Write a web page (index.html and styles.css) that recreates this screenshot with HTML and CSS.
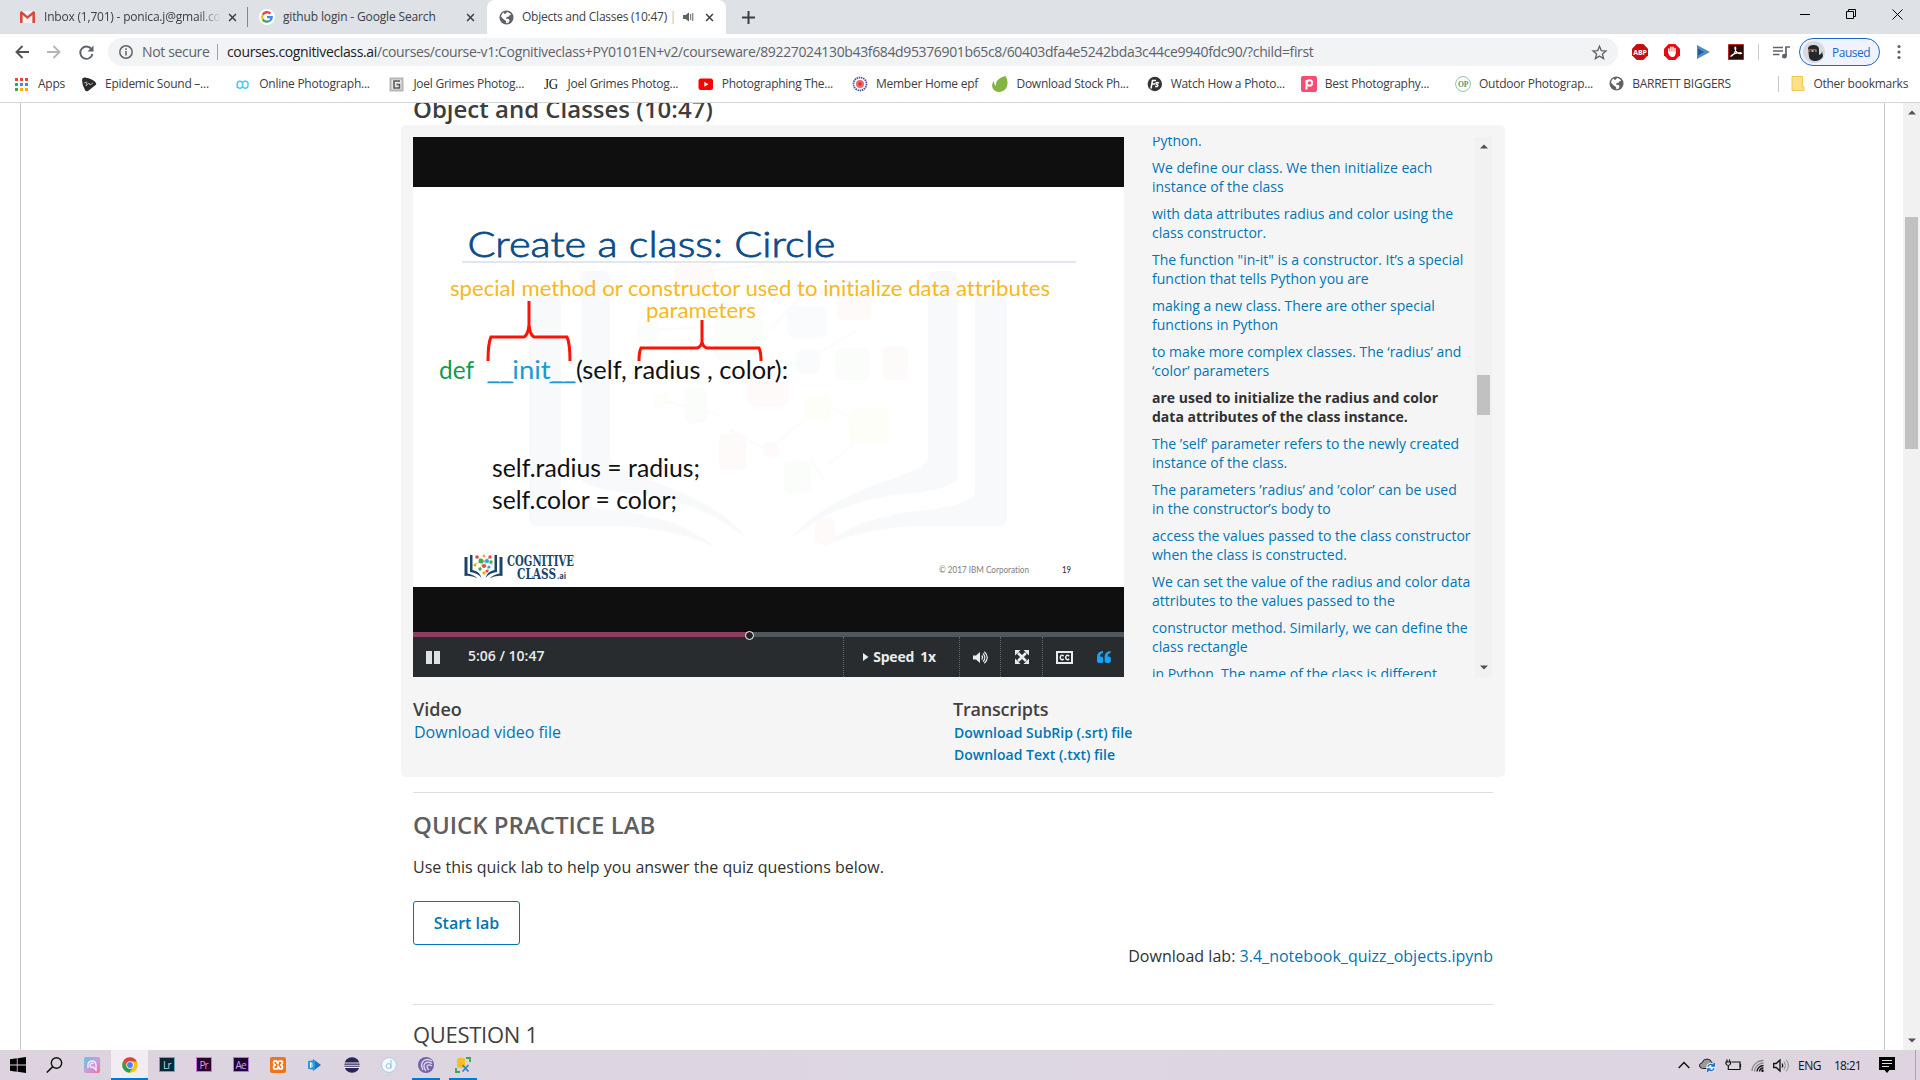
FILE: index.html
```html
<!DOCTYPE html>
<html lang="en">
<head>
<meta charset="utf-8">
<title>Objects and Classes (10:47)</title>
<link rel="stylesheet" href="styles.css">
</head>
<body>
<svg width="0" height="0" class="defs">
  <symbol id="close" viewBox="0 0 10 10"><path d="M1.2 1.2l7.6 7.6M8.8 1.2L1.2 8.8" stroke="#3c4043" stroke-width="1.7" fill="none"/></symbol>
  <symbol id="globe" viewBox="0 0 16 16"><circle cx="8" cy="8" r="7.5" fill="#5f6368"/><path d="M8.500 2.200c2 .3 3.500 1.300 4.600 2.800l-1.700.2-.8 1.700-2.400.6-.8 1.600 2.900.4 1 1.700-1.500 2.600-2 .3-.3-2.400-3-2.200-2.300-2.600c.2-2 1.400-3.700 3-4.300l.5 1.600 1.700-.4z" fill="#fff"/></symbol>
  <symbol id="tri-up" viewBox="0 0 8 5"><path d="M0 4.500L4 .5l4 4z" fill="#505050"/></symbol>
  <symbol id="tri-down" viewBox="0 0 8 5"><path d="M0 .5l4 4 4-4z" fill="#505050"/></symbol>
</svg>

<header class="browser">
  <div class="tabs">
    <div class="tab tab-mail">
      <svg width="15" height="12" viewBox="0 0 15 12"><path d="M1 0h13v12H1z" fill="#f2f2f2"/><path d="M0 1v11h2.600V4l4.900 4 4.900-4v8H15V1L13.500 0 7.500 5 1.500 0z" fill="#d54b3d"/></svg>
      <span class="tab-title">Inbox (1,701) - ponica.j@gmail.co</span>
      <svg class="x" width="9" height="9"><use href="#close"/></svg>
    </div>
    <div class="tab tab-search">
      <svg class="g" width="16" height="16" viewBox="0 0 16 16"><circle cx="8" cy="8" r="8" fill="#fff"/><g fill="none" stroke-width="2.300"><path d="M11.400 4.600A4.800 4.800 0 0 0 3.800 5.700" stroke="#ea4335"/><path d="M3.800 5.700a4.800 4.800 0 0 0 0 4.600" stroke="#fbbc05"/><path d="M3.800 10.300a4.800 4.800 0 0 0 7.300 1.200" stroke="#34a853"/><path d="M11.100 11.500A4.600 4.600 0 0 0 12.700 8.200H8" stroke="#4285f4"/></g></svg>
      <span class="tab-title">github login - Google Search</span>
      <svg class="x" width="9" height="9"><use href="#close"/></svg>
    </div>
    <div class="tab tab-active">
      <svg width="15" height="15"><use href="#globe"/></svg>
      <span class="tab-title">Objects and Classes (10:47) <i>|</i></span>
      <svg class="snd" width="11" height="10" viewBox="0 0 11 10"><path d="M0 3h2.500L6 .5v9L2.500 7H0z" fill="#5f6368"/><path d="M7.700 2v6M9.800 1v8" stroke="#5f6368"/></svg>
      <svg class="x" width="9" height="9"><use href="#close"/></svg>
    </div>
    <svg class="plus" width="13" height="13" viewBox="0 0 13 13"><path d="M6.500 0v13M0 6.500h13" stroke="#3c4043" stroke-width="2"/></svg>
    <div class="window-buttons">
      <svg width="10" height="11" viewBox="0 0 10 11"><path d="M0 5.500h10" stroke="#000"/></svg>
      <svg width="10" height="10" viewBox="0 0 10 10"><path d="M.5 2.500h7v7h-7zM2.500 2.500v-2h7v7h-2" fill="none" stroke="#000"/></svg>
      <svg width="11" height="11" viewBox="0 0 11 11"><path d="M.5.5l10 10M10.500.5l-10 10" stroke="#000"/></svg>
    </div>
  </div>

  <div class="toolbar">
    <svg width="14" height="14" viewBox="0 0 14 14"><path d="M14 7H1.500M7.500 1l-6 6 6 6" fill="none" stroke="#4f5357" stroke-width="1.900"/></svg>
    <svg width="14" height="14" viewBox="0 0 14 14"><path d="M0 7h12.500M6.500 1l6 6-6 6" fill="none" stroke="#b4b7ba" stroke-width="1.900"/></svg>
    <svg width="15" height="15" viewBox="0 0 15 15"><path d="M12.600 4.200A6.200 6.200 0 1 0 13.500 9" fill="none" stroke="#5f6368" stroke-width="1.900"/><path d="M14.500.5v6h-6z" fill="#5f6368"/></svg>
    <div class="omnibox">
      <svg width="14" height="14" viewBox="0 0 14 14"><circle cx="7" cy="7" r="6.200" fill="none" stroke="#5f6368" stroke-width="1.500"/><path d="M7 6v4.500M7 3.300v1.600" stroke="#5f6368" stroke-width="1.500"/></svg>
      <span class="not-secure">Not secure</span>
      <span class="url"><b>courses.cognitiveclass.ai</b>/courses/course-v1:Cognitiveclass+PY0101EN+v2/courseware/89227024130b43f684d95376901b65c8/60403dfa4e5242bda3c44ce9940fdc90/?child=first</span>
      <svg class="star" width="15" height="15" viewBox="0 0 15 15"><path d="M7.500 1.300l1.800 4.300 4.700.4-3.600 3 1.200 4.600-4.100-2.500-4.100 2.500L4.600 9 1 6l4.700-.4z" fill="none" stroke="#5f6368" stroke-width="1.300"/></svg>
    </div>
    <div class="extensions">
      <svg width="16" height="16" viewBox="0 0 16 16"><path d="M4.700 0h6.600L16 4.700v6.600L11.300 16H4.700L0 11.300V4.700z" fill="#c70d0d"/><text x="1.200" y="10.900" textLength="13.600" lengthAdjust="spacingAndGlyphs" class="abp">ABP</text></svg>
      <svg width="16" height="16" viewBox="0 0 16 16"><path d="M4.700 0h6.600L16 4.700v6.600L11.300 16H4.700L0 11.300V4.700z" fill="#e40d13"/><path d="M4.800 8.500V5M6.900 7.500V3.200M9 7.500V3.200M11 8V4.500" stroke="#fff" stroke-width="1.500" stroke-linecap="round"/><path d="M4 7.500h7.800c0 3-.8 5.500-3.300 5.500S4.500 11 4 7.500z" fill="#fff"/></svg>
      <svg width="13" height="14" viewBox="0 0 13 14"><path d="M0 0l13 7-13 7z" fill="#4a8fc8"/><path d="M1 3.500l6 3.500-6 3.500z" fill="#245b8f"/></svg>
      <svg width="16" height="16" viewBox="0 0 16 16"><path d="M.5.5h15v15H.5z" fill="#2a0b08" stroke="#b9261c"/><path d="M2.500 12.500c3-1 5.500-5 5.300-8.500-.1-1.500-1.300-1-.9.500.9 3.500 3.500 5.500 6 5.300 1.300-.2.500-1.300-1-1.200-3.500 0-7 1.400-9.400 3.900z" fill="none" stroke="#fff" stroke-width="1.100"/></svg>
      <i class="rule"></i>
      <svg width="17" height="13" viewBox="0 0 17 13"><path d="M0 1.500h10M0 5h10M0 8.500h6.500M13 10V1h4" fill="none" stroke="#5f6368" stroke-width="1.700"/><circle cx="11.400" cy="10.200" r="2.400" fill="#5f6368"/></svg>
      <div class="profile">
        <svg width="22" height="22" viewBox="0 0 22 22"><circle cx="11" cy="11" r="11" fill="#d7dade"/><path d="M5 7c1-4 11-4 11 1v6c2-1 3-2 3-4l1 5c-2 6-13 7-14 1z" fill="#24272b"/><path d="M5.500 8.500h8V11h-8z" fill="#d8a483"/><path d="M6.500 10h2M10.500 10h2" stroke="#111" stroke-width="1.300"/></svg>
        <span>Paused</span>
      </div>
      <svg width="4" height="16" viewBox="0 0 4 16"><g fill="#5f6368"><circle cx="2" cy="2.500" r="1.600"/><circle cx="2" cy="8" r="1.600"/><circle cx="2" cy="13.500" r="1.600"/></g></svg>
    </div>
  </div>

  <nav class="bookmarks">
    <a class="apps"><svg width="16" height="16" viewBox="0 0 16 16"><path d="M1 2h3v3H1zM6 2h3v3H6zM11 2h3v3h-3z" fill="#e8453c"/><path d="M1 7h3v3H1zM1 12h3v3H1z" fill="#34a853"/><path d="M6 7h3v3H6z" fill="#4285f4"/><path d="M11 7h3v3h-3z" fill="#4285f4"/><path d="M6 12h3v3H6zM11 12h3v3h-3z" fill="#f9ab00"/></svg><span>Apps</span></a>
    <a><svg width="16" height="16" viewBox="0 0 16 16"><path d="M1 4Q1 1 4 1.500q8 1 11 5.500 1 1.500-1 2.500l-7 5.500q-2 1-3-1Q1 9 1 4z" fill="#2c2c2c"/><path d="M3 7l3-1-1 4 3-3 1 2 3-2" stroke="#aaa" fill="none"/></svg><span>Epidemic Sound –...</span></a>
    <a><svg width="16" height="16" viewBox="0 0 16 16"><path d="M2.200 12V8a2.700 2.700 0 0 1 5.400 0v4M7.600 7a2.800 2.800 0 0 1 5.400 0v2.500a2.700 2.700 0 0 1-5.400 0M2.200 9.500a2.700 2.700 0 0 0 5.400 0" fill="none" stroke="#3fd0f5" stroke-width="1.500"/></svg><span>Online Photograph...</span></a>
    <a><svg width="16" height="16" viewBox="0 0 16 16"><path d="M1.500 2.500h12v12h-12z" fill="#e6e6e6" stroke="#b5b5b5" stroke-width="2"/><path d="M11 5H5v7h5.500V8.500H7.500" fill="none" stroke="#555" stroke-width="1.500"/></svg><span>Joel Grimes Photog...</span></a>
    <a><svg width="16" height="16" viewBox="0 0 16 16"><text x="0" y="13" textLength="14" lengthAdjust="spacingAndGlyphs" class="jg">JG</text></svg><span>Joel Grimes Photog...</span></a>
    <a><svg width="16" height="16" viewBox="0 0 16 16"><rect x=".5" y="2.500" width="14.500" height="11.500" rx="2.500" fill="#f00"/><path d="M6.300 5.700L10.500 8.200l-4.200 2.600z" fill="#fff"/></svg><span>Photographing The...</span></a>
    <a class="member"><svg width="16" height="16" viewBox="0 0 16 16"><circle cx="8" cy="8" r="6.500" fill="#fff" stroke="#4a58a8" stroke-width="1.800" stroke-dasharray="1.500 .7"/><circle cx="8" cy="8" r="4" fill="#e9696d"/><path d="M6 8h4M8 6v4" stroke="#d22"/></svg><span>Member Home epf</span></a>
    <a><svg width="16" height="16" viewBox="0 0 16 16"><path d="M13.500 0c2 3 3.500 9 0 13-3 3.500-8.500 4-11.500 1C-1 11 0 7 2 5c0 3 1 4 2 5C3 4 9 1 13.500 0z" fill="#82b541"/></svg><span>Download Stock Ph...</span></a>
    <a><svg width="16" height="16" viewBox="0 0 16 16"><circle cx="7.800" cy="8" r="7.200" fill="#333"/><path d="M4 12.500L5.500 4.500H9M5 8h3M12 7q-3-1.300-3 .4 0 1 1.200 1.200 1.200.7 0 1.900H8" fill="none" stroke="#fff" stroke-width="1.500"/></svg><span>Watch How a Photo...</span></a>
    <a><svg width="16" height="16" viewBox="0 0 16 16"><rect width="16" height="16" rx="2" fill="#fa4b70"/><path d="M5.500 13.500V4" stroke="#fff" stroke-width="2"/><circle cx="8.500" cy="7" r="2.700" fill="none" stroke="#fff" stroke-width="1.900"/></svg><span>Best Photography...</span></a>
    <a><svg width="16" height="16" viewBox="0 0 16 16"><circle cx="8" cy="8" r="7.400" fill="#fff" stroke="#8fc4a6"/><text x="3" y="11.300" textLength="10" lengthAdjust="spacingAndGlyphs" class="op">OP</text></svg><span>Outdoor Photograp...</span></a>
    <a><svg width="15" height="15"><use href="#globe"/></svg><span>BARRETT BIGGERS</span></a>
    <a class="other"><svg width="13" height="15" viewBox="0 0 13 15"><path d="M1 .5h10.500v10.500H13v3.500H1z" fill="#fbe08a" stroke="#ecc94f"/></svg><span>Other bookmarks</span></a>
  </nav>
</header>

<div class="viewport">
  <main class="page">
    <div class="column">
      <h3 class="video-title">Object and Classes (10:47)</h3>
      <section class="video-box">
        <div class="media">
          <div class="player">
            <svg class="slide" viewBox="413 187 711 400" width="711" height="400">
              <rect x="413" y="187" width="711" height="400" fill="#fff"/>
              <g fill="#f7f9fb">
                <path d="M529 300q0-5 6-5h18q8 0 8 6v193q10 13 60 17 60 8 94 36-50-22-110-21h-68q-8 0-8-9z"/>
                <path d="M581 276q0-5 6-5h14q9 0 9 8v180q2 8 36 20 75 25 101 60-45-38-110-45-50-4-56-15z"/>
                <path d="M1007 300q0-5-6-5h-18q-8 0-8 6v193q-10 13-60 17-60 8-94 36 50-22 110-21h68q8 0 8-9z"/>
                <path d="M957 276q0-5-6-5h-14q-9 0-9 8v180q-2 8-36 20-75 25-101 60 45-38 110-45 50-4 56-15z"/>
              </g>
              <path d="M694 272l84-8M640 330l100-4M770 330l37-40 46 10M740 380l67-20 50-30M820 400l50 30-42 35M730 430l38 20 48-40M660 400l60 15M811 460l13 20" fill="none" stroke="#fbfbfb" stroke-width="2"/>
              <g fill="#fefaf9"><rect x="674" y="264" width="40" height="36" rx="8"/><rect x="837" y="293" width="34" height="27" rx="7"/><rect x="882" y="346" width="26" height="34" rx="6"/><rect x="719" y="434" width="27" height="36" rx="6"/><rect x="763" y="442" width="15" height="15" rx="5"/><rect x="815" y="518" width="20" height="26" rx="6"/><rect x="746" y="374" width="43" height="33" rx="10"/></g>
              <g fill="#fafdf9"><rect x="714" y="316" width="50" height="44" rx="8"/><rect x="835" y="348" width="35" height="32" rx="7"/><rect x="637" y="322" width="22" height="20" rx="6"/><rect x="784" y="461" width="27" height="32" rx="6"/><rect x="684" y="388" width="23" height="35" rx="6"/></g>
              <g fill="#fefef9"><rect x="762" y="262" width="32" height="20" rx="6"/><rect x="849" y="408" width="41" height="36" rx="9"/><rect x="803" y="396" width="28" height="25" rx="7"/><rect x="653" y="394" width="15" height="14" rx="4"/></g>
              <g fill="#f9fbfd"><rect x="787" y="306" width="40" height="32" rx="8"/><rect x="796" y="350" width="24" height="24" rx="7"/></g>
              <path d="M462 262h614" stroke="#e1e6f1" stroke-width="2"/>
              <text x="467.500" y="257" textLength="368" lengthAdjust="spacingAndGlyphs" class="s-title">Create a class: Circle</text>
              <text x="450" y="295.500" textLength="600" lengthAdjust="spacingAndGlyphs" class="s-note">special method or constructor used to initialize data attributes</text>
              <text x="646" y="317.500" textLength="110" lengthAdjust="spacingAndGlyphs" class="s-note">parameters</text>
              <text x="439" y="379" textLength="35" lengthAdjust="spacingAndGlyphs" class="s-code green">def</text>
              <text x="487" y="379" textLength="89" lengthAdjust="spacingAndGlyphs" class="s-code blue">__init__</text>
              <path d="M487.500 382.500h26M549.500 382.500h26" stroke="#1c9ad7" stroke-width="1.700"/>
              <text x="576" y="379" textLength="212" lengthAdjust="spacingAndGlyphs" class="s-code">(self, radius , color):</text>
              <text x="492" y="476.500" textLength="208" lengthAdjust="spacingAndGlyphs" class="s-code">self.radius = radius;</text>
              <text x="492" y="508.500" textLength="185" lengthAdjust="spacingAndGlyphs" class="s-code">self.color = color;</text>
              <path d="M488 361q0-18 3-24h33q4-2 5-12v-24v24q1 10 5 12h33q3 6 3 24M639 361q0-9 2-13h56q4-1 5-6v-22v22q1 5 5 6h52q2 4 2 13" fill="none" stroke="#fb1405" stroke-width="3"/>
              <g fill="#1c446b"><path d="M464.500 557v19q7-1 13 2.500-4-4-10-5V557zM502.500 557v19q-7-1-13 2.500 4-4 10-5V557zM470 555v17q8 1 11.500 6-2-7-9-8V555zM497 555v17q-8 1-11.500 6 2-7 9-8V555z"/></g>
              <path d="M477 557l7 4 7-4M475 564l9-3 9 4M479 570l5-9 5 10" fill="none" stroke="#9aa" stroke-width=".6"/>
              <g fill="#3fae49"><circle cx="481" cy="561" r="2.500"/><circle cx="491" cy="562" r="1.700"/><circle cx="480" cy="569" r="1.700"/></g><g fill="#e8473a"><circle cx="477" cy="557" r="1.800"/><circle cx="484" cy="566" r="2"/><circle cx="490" cy="557" r="1.700"/><circle cx="487" cy="571" r="1.500"/></g><g fill="#f6a81c"><circle cx="475" cy="565" r="1.600"/><circle cx="484" cy="556" r="1.400"/><circle cx="484" cy="573" r="1.700"/></g><g fill="#29a5d0"><circle cx="487" cy="561" r="2"/><circle cx="489" cy="567" r="1.500"/></g>
              <text x="507" y="566" textLength="67" lengthAdjust="spacingAndGlyphs" class="s-logo">COGNITIVE</text>
              <text x="517" y="578.500" textLength="39" lengthAdjust="spacingAndGlyphs" class="s-logo">CLASS</text>
              <text x="557" y="578.500" textLength="9" lengthAdjust="spacingAndGlyphs" class="s-ai">.ai</text>
              <text x="939" y="572.500" textLength="90" lengthAdjust="spacingAndGlyphs" class="s-foot">© 2017 IBM Corporation</text>
              <text x="1062" y="572.500" textLength="9" lengthAdjust="spacingAndGlyphs" class="s-foot page-no">19</text>
            </svg>
            <div class="progress"><div class="played"></div></div>
            <div class="controls">
              <svg class="pause" width="14" height="13" viewBox="0 0 14 13"><path d="M0 0h6v13H0zM8 0h6v13H8z" fill="#e0e1e2"/></svg>
              <span class="time">5:06 / 10:47</span>
              <div class="speed"><svg width="6" height="8" viewBox="0 0 6 8"><path d="M0 0l5.500 4L0 8z" fill="#e7ecee"/></svg><span>Speed</span><span>1x</span></div>
              <div class="ctl vol"><svg width="15" height="13" viewBox="0 0 15 13"><path d="M0 4.500h3L7 1v11L3 8.500H0z" fill="#e7ecee"/><path d="M8.700 4.500q1.800 2 0 4M10 2.500q3.800 4 0 8M11.300.7q6 5.800 0 11.600" fill="none" stroke="#e7ecee" stroke-width="1.200"/></svg></div>
              <div class="ctl full"><svg width="14" height="14" viewBox="0 0 14 14"><path d="M3 3l8 8M11 3l-8 8" stroke="#e7ecee" stroke-width="2.600"/><path d="M0 0h5.500L0 5.500zM14 0v5.500L8.500 0zM0 14V8.500L5.500 14zM14 14H8.500L14 8.500z" fill="#e7ecee"/></svg></div>
              <div class="ctl cc"><svg width="17" height="13" viewBox="0 0 17 13"><path d="M1 1h15v11H1z" fill="none" stroke="#e7ecee" stroke-width="2"/><path d="M7.700 5q-3-2-3.500 1.500Q4.700 10 7.700 8M13.200 5q-3-2-3.500 1.500Q10.200 10 13.200 8" fill="none" stroke="#e7ecee" stroke-width="1.600"/></svg></div>
              <div class="ctl quote"><svg width="14" height="12" viewBox="0 0 14 12"><path d="M6 0v2Q3 2.500 3 5.500h1.500Q6.300 5.700 6.300 7.500v2.300Q6.300 12 4.300 12H2Q0 12 0 10V6Q0 .5 6 0zM13.600 0v2q-3 .5-3 3.500h1.500q1.800.2 1.800 2v2.300q0 2.200-2 2.200H9.600q-2 0-2-2V6q0-5.500 6-6z" fill="#15a4f5"/></svg></div>
            </div>
          </div>
          <div class="transcript">
            <ol>
              <li>Python.</li>
              <li>We define our class. We then initialize each<br>instance of the class</li>
              <li>with data attributes radius and color using the<br>class constructor.</li>
              <li>The function "in-it" is a constructor. It’s a special<br>function that tells Python you are</li>
              <li>making a new class. There are other special<br>functions in Python</li>
              <li>to make more complex classes. The ‘radius’ and<br>‘color’ parameters</li>
              <li class="current">are used to initialize the radius and color<br>data attributes of the class instance.</li>
              <li>The ’self’ parameter refers to the newly created<br>instance of the class.</li>
              <li>The parameters ’radius’ and ’color’ can be used<br>in the constructor’s body to</li>
              <li>access the values passed to the class constructor<br>when the class is constructed.</li>
              <li>We can set the value of the radius and color data<br>attributes to the values passed to the</li>
              <li>constructor method. Similarly, we can define the<br>class rectangle</li>
              <li>in Python. The name of the class is different</li>
            </ol>
            <div class="scrollbar inner"><svg width="8" height="5"><use href="#tri-up"/></svg><i></i><svg width="8" height="5"><use href="#tri-down"/></svg></div>
          </div>
        </div>
        <div class="downloads">
          <div><h4>Video</h4><a class="dl-video">Download video file</a></div>
          <div class="dl-text"><h4>Transcripts</h4><a>Download SubRip (.srt) file</a><a>Download Text (.txt) file</a></div>
        </div>
      </section>
      <section class="lab">
        <h2>QUICK PRACTICE LAB</h2>
        <p>Use this quick lab to help you answer the quiz questions below.</p>
        <button>Start lab</button>
        <p class="notebook">Download lab: <a>3.4_notebook_quizz_objects.ipynb</a></p>
      </section>
      <section class="question"><h2>QUESTION 1</h2></section>
    </div>
  </main>
  <div class="scrollbar outer"><svg width="8" height="5"><use href="#tri-up"/></svg><i></i><svg width="8" height="5"><use href="#tri-down"/></svg></div>
</div>

<footer class="taskbar">
  <div class="task"><svg width="16" height="16" viewBox="0 0 16 16"><path d="M0 2.300L6.800 1.300V7.600H0zM7.600 1.200L16 0v7.600H7.600zM0 8.400h6.800v6.300L0 13.700zM7.600 8.400H16V16l-8.400-1.200z"/></svg></div>
  <div class="task"><svg width="17" height="16" viewBox="0 0 17 16"><circle cx="10.500" cy="6" r="5.200" fill="none" stroke="#111" stroke-width="1.400"/><path d="M6.800 9.700L.8 15.500" stroke="#111" stroke-width="1.600"/></svg></div>
  <div class="task"><svg width="16" height="16" viewBox="0 0 16 16"><defs><linearGradient id="pk" x2="1" y2="1"><stop stop-color="#58c6e6"/><stop offset=".5" stop-color="#c5a0dc"/><stop offset="1" stop-color="#f06ca5"/></linearGradient></defs><rect width="16" height="16" rx="2" fill="url(#pk)"/><path d="M4 11V7.500Q4.500 4 8 4t4 3.500V13L9 10q-3 1-3-2 1-2.500 3.500-1.500" fill="none" stroke="#f5e9fa" stroke-width="1.400"/></svg></div>
  <div class="task active"><svg width="16" height="16" viewBox="0 0 16 16"><circle cx="8" cy="8" r="7.700" fill="#fbc116"/><path d="M1.200 4.300A7.700 7.700 0 0 1 14.900 4.600H8L4.600 9.500z" fill="#de4437"/><path d="M1.200 4.300A7.700 7.700 0 0 0 7.500 15.700L11 10 8 11.500 4.800 9.700z" fill="#2aa150"/><circle cx="8" cy="8" r="3.700" fill="#fff"/><circle cx="8" cy="8" r="2.900" fill="#4385f5"/></svg></div>
  <div class="task"><svg width="16" height="16" viewBox="0 0 16 16"><path d="M.5.500h15v14H.5z" fill="#0b2733" stroke="#62a7bd"/><text x="4" y="11.500" textLength="8.500" class="adobe lr">Lr</text></svg></div>
  <div class="task"><svg width="16" height="16" viewBox="0 0 16 16"><path d="M.5.500h15v14H.5z" fill="#29052f" stroke="#d96be9"/><text x="3.500" y="11.500" textLength="9" class="adobe pr">Pr</text></svg></div>
  <div class="task"><svg width="16" height="16" viewBox="0 0 16 16"><path d="M.5.500h15v14H.5z" fill="#1d0737" stroke="#ae77db"/><text x="2.500" y="11.500" textLength="11" class="adobe ae">Ae</text></svg></div>
  <div class="task"><svg width="16" height="16" viewBox="0 0 16 16"><rect width="16" height="16" rx="2" fill="#ef751d"/><path d="M6.500 4H4.200Q2.500 6 5 8q-2.500 2-.8 4h2.300q1.500 0 1.500-2t1.500 2h2.300q1.700-2-.8-4 2.500-2 .8-4H9.500Q8 4 8 6T6.500 4z" fill="none" stroke="#fff" stroke-width="1.700"/></svg></div>
  <div class="task"><svg width="13" height="12" viewBox="0 0 13 12"><path d="M5 0l8 6-8 6z" fill="#1878bd"/><path d="M0 2l7-1v10l-7-1z" fill="#3297d5"/><path d="M2.500 3.500v5M2 4h1.500q1.500 1 0 2 2 1 0 2H2" stroke="#fff" fill="none"/></svg></div>
  <div class="task"><svg width="16" height="16" viewBox="0 0 16 16"><circle cx="8" cy="8" r="7.800" fill="#2e2454"/><path d="M0 6h16M0 8.200h16M0 10.400h16" stroke="#eee" stroke-width="1.100"/></svg></div>
  <div class="task"><svg width="16" height="16" viewBox="0 0 16 16"><circle cx="8" cy="8" r="7.400" fill="#f6f9fc" stroke="#a5cfe5"/><circle cx="7.500" cy="9" r="2.400" fill="none" stroke="#8fc5e2"/><path d="M10 3v8.800" stroke="#8fc5e2"/></svg></div>
  <div class="task running"><svg width="16" height="16" viewBox="0 0 16 16"><circle cx="8" cy="8" r="8" fill="#7762a8"/><path d="M14 4Q9 1 5.500 4T5 13M14 6.500Q9.500 4 7 6.500T8 14M14 9Q11 7 9.500 8.500T11 13" fill="none" stroke="#e0d8f0" stroke-width="1.400"/></svg></div>
  <div class="task running"><svg width="16" height="16" viewBox="0 0 16 16"><path d="M2 2q4-3 8 0v8q-4 2-8 0z" fill="#f8bd22"/><path d="M11 1h4v4M1 11v4h4" fill="none" stroke="#3fa64a" stroke-width="1.800"/><path d="M7.500 8l6 6.500M13.500 8l-6 6.500" stroke="#2584cc" stroke-width="1.700"/></svg></div>
  <div class="tray">
    <svg width="12" height="8" viewBox="0 0 12 8"><path d="M.7 7L6 1.500 11.300 7" fill="none" stroke="#111" stroke-width="1.400"/></svg>
    <svg width="17" height="14" viewBox="0 0 17 14"><path d="M3.500 10.500Q0 10 .5 7 1 5 3 5 4 1 8 1q4 0 5 4 3 .5 2.500 3.500l-1 2z" fill="#999" stroke="#222"/><circle cx="12" cy="9.500" r="4.800" fill="#eef3f8"/><path d="M8.700 8.700q2-4 6-1.400M15.300 10.300q-2 4-6 1.400M15.300 5v3h-3M8.700 14v-3h3" fill="none" stroke="#1670c4" stroke-width="1.300"/></svg>
    <svg width="17" height="12" viewBox="0 0 17 12"><path d="M6.500 3H15v7.500H5.500M15.500 5v3.500M1 3h4.500v2q-2.200 3-4.500 0zM2 .500v2.500M4.500.500v2.500M3.300 6v4.500h3" fill="none" stroke="#111" stroke-width="1.200"/></svg>
    <svg width="13" height="13" viewBox="0 0 13 13"><g fill="none" stroke-width="1.300"><path d="M1 12A11 11 0 0 1 12.500 1.500M3.500 12.500A9 9 0 0 1 12.500 4" stroke="#888"/><path d="M6 12.500a6.500 6.500 0 0 1 6.500-6M8.500 12.500a4 4 0 0 1 4-3.500" stroke="#111"/></g><circle cx="11.500" cy="11.700" r="1.200"/></svg>
    <svg width="17" height="13" viewBox="0 0 17 13"><path d="M.7 4.500h2.500L7 1v11L3.200 8.500H.7z" fill="none" stroke="#111" stroke-width="1.300"/><path d="M9 4.500q1.500 2 0 4" fill="none" stroke="#111" stroke-width="1.200"/><path d="M11 2.500q3 4 0 8M13.200.7q4.500 5.800 0 11.600" fill="none" stroke="#888"/></svg>
    <span class="lang">ENG</span>
    <span class="clock">18:21</span>
    <svg class="notes" width="16" height="16" viewBox="0 0 16 16"><path d="M0 0h16v13h-5.500L8 16l-2.500-3H0z"/><path d="M3 3.500h10M3 6.500h10M3 9.500h7" stroke="#e5dfe8" stroke-width="1.200"/></svg>
  </div>
</footer>
</body>
</html>
```
FILE: styles.css
```css
* { box-sizing: border-box; }
body { margin: 0; width: 1920px; height: 1080px; overflow: hidden; display: flex; flex-direction: column; background: #fff; font-family: "Open Sans", sans-serif; color: #313131; }
svg { display: block; flex: none; overflow: visible; }
.defs { position: absolute; }
h2, h3, h4, p, ol { margin: 0; padding: 0; font-weight: 400; }

/* Browser chrome */
.browser { height: 103px; flex: none; border-bottom: 1px solid #d3d6d9; font-size: 12px; color: #3c4043; }
.tabs { height: 34px; background: #dee1e6; display: flex; align-items: center; }
.tab { display: flex; align-items: center; height: 34px; }
.tab-title { white-space: nowrap; overflow: hidden; margin-left: 9px; letter-spacing: -.2px; line-height: 18px; margin-top: -1px; }
.tab-title i { font-style: normal; color: #b5b8bb; }
.tab-mail { width: 248px; padding-left: 20px; background: linear-gradient(#80868b, #80868b) right center / 1px 20px no-repeat; }
.tab-mail .tab-title { width: 176px; margin-left: 9px; -webkit-mask-image: linear-gradient(90deg, #000 155px, transparent 177px); mask-image: linear-gradient(90deg, #000 155px, transparent 177px); }
.tab-mail .x { margin-left: 8px; }
.tab-search { width: 239px; padding-left: 11px; }
.tab-search .tab-title { width: 175px; margin-left: 8px; letter-spacing: -.15px; }
.tab-search .x { margin-left: 8px; }
.tab-active { width: 239px; padding-left: 12px; background: #fff; border-radius: 8px 8px 0 0; }
.tab-active .tab-title { width: 154px; margin-left: 8px; letter-spacing: -.25px; }
.tab-active .snd { margin-left: 7px; }
.tab-active .x { margin-left: 11px; }
.plus { margin-left: 16px; }
.window-buttons { margin-left: auto; display: flex; gap: 36px; padding-right: 17px; margin-bottom: 6px; align-items: center; }
.toolbar { height: 36px; display: flex; align-items: center; padding-left: 15px; gap: 18px; }
.omnibox { width: 1510px; height: 28px; margin-left: -4px; border-radius: 14px; background: #f1f3f4; display: flex; align-items: center; padding: 0 11px; font-size: 14px; color: #5f6368; white-space: nowrap; }
.not-secure { margin-left: 9px; width: 76px; border-right: 1px solid #9aa0a6; line-height: 16px; letter-spacing: -.35px; }
.url { margin-left: 9px; letter-spacing: -.36px; line-height: 18px; margin-top: -1px; }
.url b { font-weight: 400; color: #202124; }
.star { margin-left: auto; }
.extensions { display: flex; align-items: center; margin-left: -4px; }
.extensions > :nth-child(2) { margin-left: 16px; }
.extensions > :nth-child(3) { margin-left: 17px; }
.extensions > :nth-child(4) { margin-left: 18px; }
.rule { width: 1px; height: 16px; background: #c9ccd0; margin: 0 14px; }
.abp { font: 700 6.500px "Open Sans", sans-serif; fill: #fff; }
.jg { font: 15px "Liberation Serif", serif; fill: #111; }
.op { font: 700 8px "Liberation Serif", serif; fill: #4b9b6c; }
.profile { width: 81px; height: 28px; margin: 0 17px 0 9px; border: 1px solid #1a66d2; border-radius: 14px; background: #eef3fd; display: flex; align-items: center; padding-left: 3px; gap: 7px; color: #1967d2; letter-spacing: -.5px; }
.bookmarks { height: 28px; display: flex; align-items: center; padding: 0 0 1px 14px; }
.bookmarks a { width: 154.200px; flex: none; display: flex; align-items: center; gap: 8px; white-space: nowrap; letter-spacing: -.25px; }
.bookmarks .apps { width: 67px; }
.bookmarks .member { width: 140.500px; }
.bookmarks .other { width: 134px; margin-left: 15px; padding-left: 13px; gap: 9px; background: linear-gradient(#c4c7ca, #c4c7ca) left center / 1px 16px no-repeat; }

/* Page */
.viewport { height: 947px; flex: none; display: flex; overflow: hidden; }
.page { width: 1865px; margin-left: 20px; border: solid #c5c8cb; border-width: 0 1px; display: flex; }
.column { width: 1104px; margin-left: 380px; flex: none; }
.scrollbar { width: 17px; background: #f1f1f1; display: flex; flex-direction: column; align-items: center; }
.scrollbar i { width: 13px; background: #c1c1c1; }
.scrollbar svg:last-child { margin-top: auto; }
.outer { margin-left: 18px; padding: 7px 0; }
.outer i { height: 232px; margin-top: 102px; }
.inner { padding: 7px 0; height: 540px; flex: none; }
.inner i { height: 40px; margin-top: 226px; }
.video-title { height: 22px; padding-bottom: 1px; line-height: 30px; margin-left: 12px; font-size: 24px; font-weight: 600; color: #3d3d3d; display: flex; align-items: flex-end; white-space: nowrap; }
.video-box { height: 652px; padding: 12px 12px 0; background: #f5f5f5; border-radius: 5px; }
.media { display: flex; gap: 28px; }
.player { width: 711px; height: 540px; background: #0f0f0f; padding-top: 50px; flex: none; }
.progress { margin-top: 45px; height: 5px; background: #4f595d; }
.played { position: relative; width: 337px; height: 5px; background: #8e3e63; }
.played::after { content: ""; position: absolute; right: -3.500px; top: -1px; width: 7px; height: 7px; border: 1.500px solid #fff; border-radius: 50%; background: #222; }
.controls { height: 40px; background: #282c2e; display: flex; align-items: center; color: #e7ecee; font-size: 14px; }
.pause { margin-left: 13px; }
.time { margin-left: 28px; width: 375px; font-weight: 600; margin-top: -3px; }
.speed, .ctl { height: 40px; display: flex; align-items: center; justify-content: center; border-left: 1px dotted #60686c; }
.speed { width: 116px; padding-right: 4px; font-weight: 700; letter-spacing: -.2px; }
.speed span { margin-left: 6px; margin-top: -1px; }
.speed svg + span { margin-left: 4px; }
.vol { width: 41px; } .full { width: 42px; } .cc { width: 43px; } .quote { border: 0; width: 38px; }
.transcript { display: flex; width: 341px; height: 540px; overflow: hidden; }
.transcript ol { list-style: none; width: 323px; margin-top: -6px; flex: none; font-size: 14px; line-height: 19px; color: #0075b4; white-space: nowrap; }
.transcript li { margin-bottom: 8px; }
.transcript .current { font-weight: 700; color: #313131; }
.downloads { display: flex; padding-top: 20px; }
.downloads > div { width: 540px; display: flex; flex-direction: column; }
.downloads h4 { font-size: 18px; line-height: 24px; font-weight: 600; color: #414141; }
.downloads .dl-text h4 { letter-spacing: -.2px; }
.downloads a { color: #0075b4; margin-left: 1px; font-size: 16px; line-height: 22px; }
.downloads .dl-text a { font-size: 14px; font-weight: 600; }
.downloads .dl-text h4 + a { margin-top: 1px; }
.lab { margin: 15px 12px 0; border-top: 1px solid #ddd; height: 212px; padding-top: 15px; }
.lab h2 { font-size: 24px; line-height: 34px; font-weight: 600; color: #5e5e5e; }
.lab p { font-size: 16px; line-height: 24px; margin-top: 13px; }
.lab a { color: #0075b4; }
.lab button { display: block; margin-top: 22px; width: 107px; height: 44px; border: 1px solid #0075b4; border-radius: 3px; background: #fff; color: #0075b4; font: 600 16px "Open Sans", sans-serif; padding: 0; }
.lab .notebook { text-align: right; margin-top: -1px; letter-spacing: .02px; }
.question { margin: 0 12px; border-top: 1px solid #ddd; padding-top: 12px; }
.question h2 { font-size: 22px; line-height: 34px; color: #414141; letter-spacing: -.3px; }

/* Slide lettering */
.slide text { font-variant-ligatures: none; }
.s-title { font: 300 36px Lato, sans-serif; fill: #0a4c89; stroke: #0a4c89; stroke-width: .8px; }
.s-note { font: 22px Lato, sans-serif; fill: #f6b91d; }
.s-code { font: 25px Lato, sans-serif; fill: #111; }
.s-code.green { fill: #129a52; }
.s-code.blue { fill: #1c9ad7; }
.s-logo { font: 700 14px "DejaVu Serif", serif; fill: #1c446b; }
.s-ai { font: 700 9px "Open Sans", sans-serif; fill: #1c446b; }
.s-foot { font: 9px Lato, sans-serif; fill: #7e7e7e; }
.s-foot.page-no { fill: #222; }

/* Taskbar */
.taskbar { height: 30px; flex: none; background: linear-gradient(90deg, #dcd3de, #ddd7e1 50%, #ddd4e0); display: flex; }
.task { width: 37px; height: 30px; display: flex; align-items: center; justify-content: center; }
.task:first-child { width: 36px; }
.task:nth-child(3) { width: 38px; }
.active { background: #f1edf3; box-shadow: inset 0 -2px #0078d7; }
.running { background: linear-gradient(#0078d7, #0078d7) center bottom / 28px 2px no-repeat; }
.adobe { font: 10px "Open Sans", sans-serif; }
.lr { fill: #b5dcec; } .pr { fill: #e28cf0; } .ae { fill: #c9a0f0; }
.tray { margin-left: auto; margin-right: 4px; width: 238px; padding-right: 20px; display: flex; align-items: center; font-size: 12px; color: #111; border-right: 1px solid #aaa3ad; }
.tray > * + * { margin-left: 9px; }
.tray .lang { margin-left: 8px; letter-spacing: -.5px; }
.tray .clock { margin-left: 13px; letter-spacing: -.7px; }
.tray .notes { margin-left: auto; }
```
